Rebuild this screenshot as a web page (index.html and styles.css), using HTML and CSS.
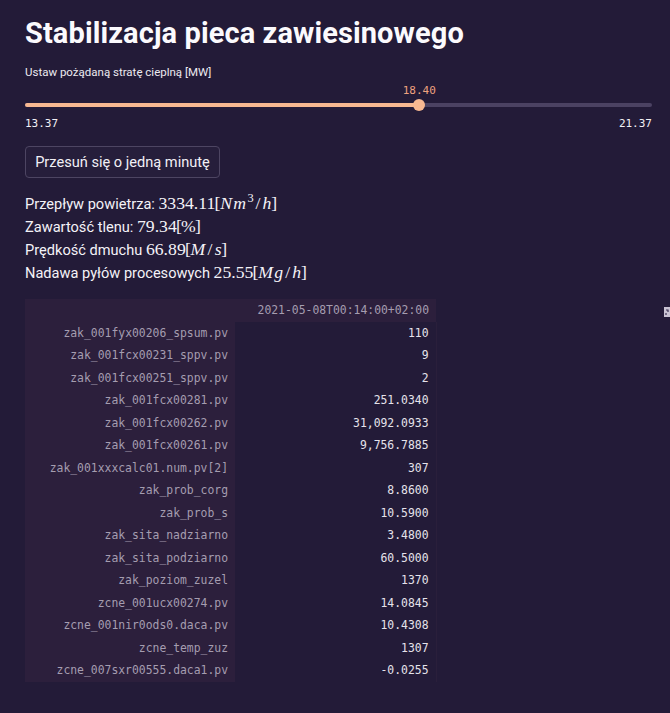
FILE: index.html
```html
<!DOCTYPE html>
<html lang="pl">
<head>
<meta charset="utf-8">
<title>Stabilizacja pieca zawiesinowego</title>
<link rel="stylesheet" href="styles.css">
</head>
<body>
<main class="app">
  <h1 class="title">Stabilizacja pieca zawiesinowego</h1>

  <section class="slider">
    <div class="slider-label">Ustaw pożądaną stratę cieplną [MW]</div>
    <div class="slider-body">
      <div class="track">
        <div class="fill" style="width: 62.875%"></div>
        <div class="thumb" style="left: 62.875%"><span class="thumb-value">18.40</span></div>
      </div>
    </div>
    <div class="slider-range"><span>13.37</span><span>21.37</span></div>
  </section>

  <button class="btn" type="button">Przesuń się o jedną minutę</button>

  <section class="metrics">
    <p>Przepływ powietrza: <span class="math">3334.11<span class="br">[</span><i>N</i><i>m</i><sup>3</sup><span class="sl">/</span><i>h</i><span class="br">]</span></span></p>
    <p>Zawartość tlenu: <span class="math">79.34<span class="br">[</span>%<span class="br">]</span></span></p>
    <p>Prędkość dmuchu <span class="math">66.89<span class="br">[</span><i>M</i><span class="sl">/</span><i>s</i><span class="br">]</span></span></p>
    <p>Nadawa pyłów procesowych <span class="math">25.55<span class="br">[</span><i>M</i><i>g</i><span class="sl">/</span><i>h</i><span class="br">]</span></span></p>
  </section>

  <div class="table-wrap">
    <table class="df">
      <thead>
        <tr><th class="blank"></th><th class="col">2021-05-08T00:14:00+02:00</th></tr>
      </thead>
      <tbody>
        <tr><th>zak_001fyx00206_spsum.pv</th><td>110</td></tr>
        <tr><th>zak_001fcx00231_sppv.pv</th><td>9</td></tr>
        <tr><th>zak_001fcx00251_sppv.pv</th><td>2</td></tr>
        <tr><th>zak_001fcx00281.pv</th><td>251.0340</td></tr>
        <tr><th>zak_001fcx00262.pv</th><td>31,092.0933</td></tr>
        <tr><th>zak_001fcx00261.pv</th><td>9,756.7885</td></tr>
        <tr><th>zak_001xxxcalc01.num.pv[2]</th><td>307</td></tr>
        <tr><th>zak_prob_corg</th><td>8.8600</td></tr>
        <tr><th>zak_prob_s</th><td>10.5900</td></tr>
        <tr><th>zak_sita_nadziarno</th><td>3.4800</td></tr>
        <tr><th>zak_sita_podziarno</th><td>60.5000</td></tr>
        <tr><th>zak_poziom_zuzel</th><td>1370</td></tr>
        <tr><th>zcne_001ucx00274.pv</th><td>14.0845</td></tr>
        <tr><th>zcne_001nir0ods0.daca.pv</th><td>10.4308</td></tr>
        <tr><th>zcne_temp_zuz</th><td>1307</td></tr>
        <tr><th>zcne_007sxr00555.daca1.pv</th><td>-0.0255</td></tr>
      </tbody>
    </table>
    <svg class="fs-icon" width="10" height="10" viewBox="0 0 10 10" aria-hidden="true">
      <rect x="0" y="0" width="10" height="10" fill="#c9c3d3"/>
      <path d="M2 3 L4 3 L4 5 M2 8 L2 6" stroke="#3a3150" stroke-width="1.2" fill="none"/>
    </svg>
  </div>
</main>
</body>
</html>
```

FILE: styles.css
```css
html, body {
  margin: 0;
  padding: 0;
  background: #231b38;
  color: #f5f3f8;
  font-family: Roboto, "Liberation Sans", sans-serif;
}

.app {
  width: 627px;
  padding: 16px 0 30px 25px;
  position: relative;
}

.title {
  margin: 0;
  font-size: 29px;
  font-weight: 700;
  line-height: 34px;
  letter-spacing: 0.1px;
  color: #fbfafd;
}

.slider {
  margin-top: 15px;
}

.slider-label {
  font-size: 11.5px;
  line-height: 14px;
  color: #eceaf0;
}

.slider-body {
  height: 32px;
  display: flex;
  align-items: flex-end;
  padding-bottom: 4px;
  box-sizing: border-box;
}

.track {
  position: relative;
  width: 100%;
  height: 4px;
  border-radius: 2px;
  background: #4b4262;
}

.fill {
  height: 100%;
  border-radius: 2px;
  background: #f7b891;
}

.thumb {
  position: absolute;
  top: 50%;
  width: 12px;
  height: 12px;
  margin: -6px 0 0 -6px;
  border-radius: 50%;
  background: #f7b891;
}

.thumb-value {
  position: absolute;
  bottom: 14px;
  left: 50%;
  transform: translateX(-50%);
  font-family: "DejaVu Sans Mono", monospace;
  font-size: 11px;
  color: #eea27f;
}

.slider-range {
  display: flex;
  justify-content: space-between;
  font-family: "DejaVu Sans Mono", monospace;
  font-size: 11px;
  line-height: 14px;
  color: #f2f0f5;
  margin-top: 6px;
}

.btn {
  margin-top: 15px;
  display: block;
  width: 195px;
  height: 32px;
  padding: 0;
  background: #261e3b;
  border: 1px solid #4d4562;
  border-radius: 4px;
  color: #f2f0f6;
  font-family: Roboto, "Liberation Sans", sans-serif;
  font-size: 14.6px;
}

.metrics {
  margin-top: 15px;
}

.metrics p {
  margin: 0;
  font-size: 14.6px;
  line-height: 23px;
  height: 23px;
  color: #f4f2f7;
}

.math {
  font-family: "Liberation Serif", "DejaVu Serif", serif;
  font-size: 17.7px;
  line-height: 1;
}

.math i {
  font-style: italic;
  margin: 0 0.6px;
}

.math .sl {
  margin: 0 1.6px;
}

.math .br {
  margin: 0 -0.8px;
}

.math sup {
  font-size: 12.4px;
  line-height: 0;
  vertical-align: 7px;
  margin-left: 1px;
}

.table-wrap {
  margin-top: 14px;
}

.df {
  border-collapse: collapse;
  font-family: "DejaVu Sans Mono", monospace;
  font-size: 11.4px;
  width: 411px;
  table-layout: fixed;
}

.df th,
.df td {
  height: 22.5px;
  padding: 0 7px 0 8px;
  text-align: right;
  font-weight: 400;
  white-space: nowrap;
  box-sizing: border-box;
}

.df th {
  background: #2c1f3c;
  color: #a59db0;
  width: 210px;
}

.df thead th.col {
  width: 201px;
}

.df td {
  color: #e6e3eb;
  background: #231b38;
  border-right: 1px solid #2a1f3b;
}

.fs-icon {
  position: absolute;
  right: -22px;
  top: 307px;
}
```
